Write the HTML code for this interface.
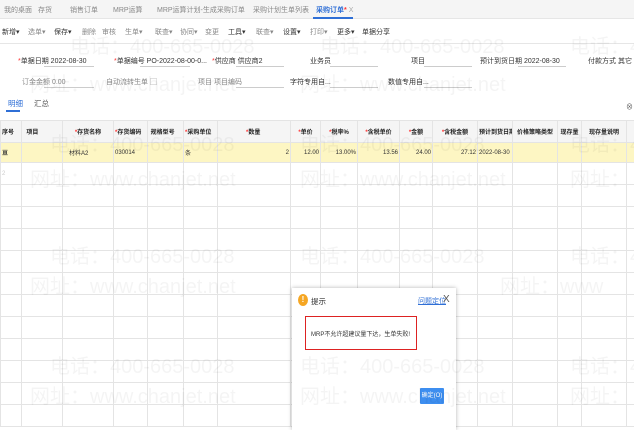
<!DOCTYPE html>
<html><head><meta charset="utf-8"><style>
*{margin:0;padding:0;box-sizing:border-box}
body{width:634px;height:430px;overflow:hidden;background:#fff;font-family:"Liberation Sans","Noto Sans CJK SC",sans-serif;font-size:7px;color:#333;position:relative}
.a{position:absolute;white-space:nowrap}
.wm{position:absolute;white-space:nowrap;color:rgba(0,0,0,0.045);font-size:20px;font-family:"Liberation Sans","Noto Sans CJK SC",sans-serif;z-index:5}
table{border-collapse:collapse;position:absolute;left:0;top:120px;table-layout:fixed;width:634px}
td{border:1px solid #e4e4e4;height:22px;font-size:6px;padding:0 1px;white-space:nowrap;overflow:hidden}
.h td{background:#f5f5f5;height:22px;font-weight:bold;color:#222}
.r1 td{background:#fdf6c3;height:20px}
.rq{color:#f33}
.ul{position:absolute;border-bottom:1px solid #ccc;height:1px}
.t{position:absolute;top:27px;white-space:nowrap;font-size:7px}
.g{color:#888}
</style></head><body>
<div class="a" style="left:0;top:0;width:634px;height:19px;background:#f5f5f5;border-bottom:1px solid #e6e6e6"></div>
<div class="a" style="top:5px;left:4px;color:#888">我的桌面</div>
<div class="a" style="top:5px;left:38px;color:#888">存货</div>
<div class="a" style="top:5px;left:70px;color:#888">销售订单</div>
<div class="a" style="top:5px;left:113px;color:#888">MRP运算</div>
<div class="a" style="top:5px;left:157px;color:#888">MRP运算计划-生成采购订单</div>
<div class="a" style="top:5px;left:253px;color:#888">采购计划生单列表</div>
<div class="a" style="top:5px;left:316px;color:#2f6fd6;font-weight:bold">采购订单<span style="color:#f33">*</span> <span style="color:#aaa;font-weight:normal">X</span></div>
<div class="a" style="left:313px;top:17px;width:40px;height:2px;background:#2f6fd6"></div>
<div class="t" style="left:2px">新增▾</div><div class="t g" style="left:28px">选单▾</div><div class="t" style="left:54px">保存▾</div><div class="t g" style="left:82px">删除</div><div class="t g" style="left:102px">审核</div><div class="t g" style="left:125px">生单▾</div><div class="t g" style="left:155px">联查▾</div><div class="t g" style="left:180px">协同▾</div><div class="t g" style="left:205px">变更</div><div class="t" style="left:228px">工具▾</div><div class="t g" style="left:256px">联查▾</div><div class="t" style="left:283px">设置▾</div><div class="t g" style="left:310px">打印▾</div><div class="t" style="left:337px">更多▾</div><div class="t" style="left:362px">单据分享</div>
<div class="a" style="left:0;top:43px;width:634px;height:1px;background:#e6e6e6"></div>
<div class="a" style="top:56px;left:18px"><span class="rq">*</span>单据日期 2022-08-30</div><div class="ul" style="left:44px;top:66px;width:50px"></div>
<div class="a" style="top:56px;left:114px"><span class="rq">*</span>单据编号 PO-2022-08-00-0...</div><div class="ul" style="left:140px;top:66px;width:50px"></div>
<div class="a" style="top:56px;left:212px"><span class="rq">*</span>供应商 供应商2</div><div class="ul" style="left:236px;top:66px;width:48px"></div>
<div class="a" style="top:56px;left:310px">业务员</div><div class="ul" style="left:330px;top:66px;width:48px"></div>
<div class="a" style="top:56px;left:411px">项目</div><div class="ul" style="left:424px;top:66px;width:48px"></div>
<div class="a" style="top:56px;left:480px">预计到货日期 2022-08-30</div><div class="ul" style="left:518px;top:66px;width:48px"></div>
<div class="a" style="top:56px;left:588px">付款方式 其它</div>
<div class="a" style="top:77px;left:22px;color:#888">订金金额 0.00</div><div class="ul" style="left:44px;top:87px;width:50px"></div>
<div class="a" style="top:77px;left:106px;color:#888">自动流转生单 ▢</div>
<div class="a" style="top:77px;left:198px;color:#888">项目 项目编码</div><div class="ul" style="left:236px;top:87px;width:48px"></div>
<div class="a" style="top:77px;left:290px">字符专用自...</div><div class="ul" style="left:330px;top:87px;width:48px"></div>
<div class="a" style="top:77px;left:388px">数值专用自...</div><div class="ul" style="left:424px;top:87px;width:48px"></div>
<div class="a" style="top:98px;left:8px;color:#2f6fd6;font-size:7.5px">明细</div>
<div class="a" style="top:98px;left:34px;color:#555;font-size:7.5px">汇总</div>
<div class="a" style="left:6px;top:110px;width:14px;height:2px;background:#2f6fd6"></div>
<div class="a" style="top:102px;left:626px;color:#555">⊗</div>
<table>
<colgroup><col style="width:21px"><col style="width:41px"><col style="width:51px"><col style="width:34px"><col style="width:36px"><col style="width:34px"><col style="width:73px"><col style="width:30px"><col style="width:37px"><col style="width:42px"><col style="width:33px"><col style="width:45px"><col style="width:35px"><col style="width:45px"><col style="width:24px"><col style="width:45px"><col style="width:8px"></colgroup>
<tr class="h"><td>序号</td><td>&nbsp;&nbsp;项目</td><td style="text-align:center"><span class="rq">*</span>存货名称</td><td><span class="rq">*</span>存货编码</td><td>&nbsp;规格型号</td><td><span class="rq">*</span>采购单位</td><td style="padding-left:28px"><span class="rq">*</span>数量</td><td style="text-align:center"><span class="rq">*</span>单价</td><td style="text-align:center"><span class="rq">*</span>税率%</td><td style="text-align:center"><span class="rq">*</span>含税单价</td><td style="text-align:center"><span class="rq">*</span>金额</td><td style="text-align:center"><span class="rq">*</span>含税金额</td><td>预计到货日期</td><td style="text-align:center">价格策略类型</td><td style="text-align:center">现存量</td><td style="text-align:center">现存量说明</td><td></td></tr>
<tr class="r1"><td><b>亘</b></td><td></td><td>&nbsp;&nbsp;&nbsp;材料A2</td><td>030014</td><td></td><td>条</td><td style="text-align:right">2</td><td style="text-align:right">12.00</td><td style="text-align:right">13.00%</td><td style="text-align:right">13.56</td><td style="text-align:right">24.00</td><td style="text-align:right">27.12</td><td>2022-08-30</td><td></td><td></td><td></td><td></td></tr>
<tr><td style="color:#ccc">2</td><td></td><td></td><td></td><td></td><td></td><td></td><td></td><td></td><td></td><td></td><td></td><td></td><td></td><td></td><td></td><td></td></tr>
<tr><td></td><td></td><td></td><td></td><td></td><td></td><td></td><td></td><td></td><td></td><td></td><td></td><td></td><td></td><td></td><td></td><td></td></tr>
<tr><td></td><td></td><td></td><td></td><td></td><td></td><td></td><td></td><td></td><td></td><td></td><td></td><td></td><td></td><td></td><td></td><td></td></tr>
<tr><td></td><td></td><td></td><td></td><td></td><td></td><td></td><td></td><td></td><td></td><td></td><td></td><td></td><td></td><td></td><td></td><td></td></tr>
<tr><td></td><td></td><td></td><td></td><td></td><td></td><td></td><td></td><td></td><td></td><td></td><td></td><td></td><td></td><td></td><td></td><td></td></tr>
<tr><td></td><td></td><td></td><td></td><td></td><td></td><td></td><td></td><td></td><td></td><td></td><td></td><td></td><td></td><td></td><td></td><td></td></tr>
<tr><td></td><td></td><td></td><td></td><td></td><td></td><td></td><td></td><td></td><td></td><td></td><td></td><td></td><td></td><td></td><td></td><td></td></tr>
<tr><td></td><td></td><td></td><td></td><td></td><td></td><td></td><td></td><td></td><td></td><td></td><td></td><td></td><td></td><td></td><td></td><td></td></tr>
<tr><td></td><td></td><td></td><td></td><td></td><td></td><td></td><td></td><td></td><td></td><td></td><td></td><td></td><td></td><td></td><td></td><td></td></tr>
<tr><td></td><td></td><td></td><td></td><td></td><td></td><td></td><td></td><td></td><td></td><td></td><td></td><td></td><td></td><td></td><td></td><td></td></tr>
<tr><td></td><td></td><td></td><td></td><td></td><td></td><td></td><td></td><td></td><td></td><td></td><td></td><td></td><td></td><td></td><td></td><td></td></tr>
<tr><td></td><td></td><td></td><td></td><td></td><td></td><td></td><td></td><td></td><td></td><td></td><td></td><td></td><td></td><td></td><td></td><td></td></tr>
</table>
<div class="a" style="left:292px;top:288px;width:164px;height:142px;background:#fff;box-shadow:0 0 4px rgba(0,0,0,0.3);z-index:3"></div>
<div class="a" style="left:298px;top:294px;width:10px;height:12px;border-radius:50%;background:#f5a623;color:#fff;font-weight:bold;text-align:center;line-height:12px;font-size:8px;z-index:4">!</div>
<div class="a" style="left:311px;top:296px;font-size:7.5px;z-index:4">提示</div>
<div class="a" style="left:418px;top:296px;font-size:7px;color:#2f6fd6;text-decoration:underline;z-index:4">问题定位</div>
<div class="a" style="left:443px;top:294px;font-size:10px;color:#555;z-index:4">X</div>
<div class="a" style="left:305px;top:316px;width:112px;height:34px;border:1.5px solid #d22;z-index:4"></div>
<div class="a" style="left:311px;top:329px;font-size:6px;z-index:4">MRP不允许超建议量下达，生单失败!</div>
<div class="a" style="left:420px;top:388px;width:24px;height:16px;background:#3d8ef0;color:#fff;font-size:6px;text-align:center;line-height:16px;border-radius:1px;z-index:4">确定(O)</div>
<div class="wm" style="left:70px;top:30px">电话：400-665-0028</div>
<div class="wm" style="left:320px;top:30px">电话：400-665-0028</div>
<div class="wm" style="left:570px;top:30px">电话：4</div>
<div class="wm" style="left:30px;top:68px">网址：www.chanjet.net</div>
<div class="wm" style="left:300px;top:68px">网址：www.chanjet.net</div>
<div class="wm" style="left:50px;top:128px">电话：400-665-0028</div>
<div class="wm" style="left:300px;top:128px">电话：400-665-0028</div>
<div class="wm" style="left:570px;top:128px">电话：4</div>
<div class="wm" style="left:30px;top:163px">网址：www.chanjet.net</div>
<div class="wm" style="left:300px;top:163px">网址：www.chanjet.net</div>
<div class="wm" style="left:570px;top:163px">网址：</div>
<div class="wm" style="left:50px;top:240px">电话：400-665-0028</div>
<div class="wm" style="left:300px;top:240px">电话：400-665-0028</div>
<div class="wm" style="left:570px;top:240px">电话：4</div>
<div class="wm" style="left:30px;top:270px">网址：www.chanjet.net</div>
<div class="wm" style="left:500px;top:270px">网址：www</div>
<div class="wm" style="left:50px;top:350px">电话：400-665-0028</div>
<div class="wm" style="left:300px;top:350px">电话：400-665-0028</div>
<div class="wm" style="left:570px;top:350px">电话：4</div>
<div class="wm" style="left:30px;top:380px">网址：www.chanjet.net</div>
<div class="wm" style="left:300px;top:380px">网址：www.chanjet.net</div>
<div class="wm" style="left:570px;top:380px">网址：</div>
</body></html>
